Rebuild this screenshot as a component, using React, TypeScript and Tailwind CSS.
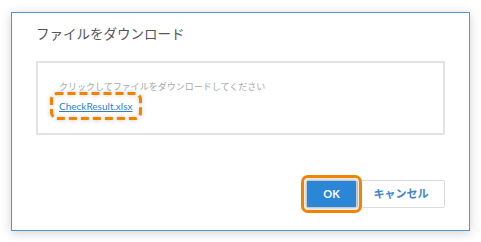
const font = { fontFamily: "Lato, 'Noto Sans CJK JP', sans-serif" };

// dashed focus ring drawn over the link
function DashedRing() {
  return (
    <svg
      className="pointer-events-none absolute inset-0"
      width="92"
      height="28"
      viewBox="0 0 92 28"
      style={{ filter: "drop-shadow(0 0 2px rgba(0,0,0,0.25))" }}
    >
      <rect
        x="1.5"
        y="1.5"
        width="89"
        height="25"
        rx="6"
        fill="none"
        stroke="#f08300"
        strokeWidth="3"
        strokeDasharray="8 4"
        strokeDashoffset="2"
      />
    </svg>
  );
}

export default function App() {
  return (
    <div className="w-[481px] h-[242px] bg-white pt-3 pl-[11px]" style={font}>
      <div className="w-[459px] h-[219px] border border-[#4f95d2] bg-white px-6 flex flex-col shadow-[0_2px_10px_rgba(0,0,0,0.18)]">
        <h2 className="mt-[11px] h-5 leading-5 text-[13.5px] text-[#555]">
          ファイルをダウンロード
        </h2>

        <div className="mt-[17px] h-[74px] border-2 border-[#e3e3e3] pl-[21px] pt-[18px]">
          <p className="text-[9px] leading-3 text-[#a8a8a8]">
            クリックしてファイルをダウンロードしてください
          </p>
          <div className="relative -ml-[9px] -mt-px flex h-7 w-[92px] items-center pl-[9px]">
            <a
              href="#"
              className="text-[10px] leading-4 text-[#2f7fd0] underline"
            >
              CheckResult.xlsx
            </a>
            <DashedRing />
          </div>
        </div>

        <div className="mt-[45px] flex justify-end">
          <button className="relative z-10 h-7 w-[51px] rounded-[2px] border border-[#c9c9c9] bg-[#2b86d8] text-[11px] font-bold text-white outline-[3px] outline-solid outline-offset-[2px] outline-[#f08300] shadow-[0_0_5px_rgba(0,0,0,0.3)]">
            OK
          </button>
          <button className="h-7 w-[88px] rounded-[2px] border border-[#dcdcdc] bg-white text-[11px] font-bold text-[#3d85cf]">
            キャンセル
          </button>
        </div>
      </div>
    </div>
  );
}
